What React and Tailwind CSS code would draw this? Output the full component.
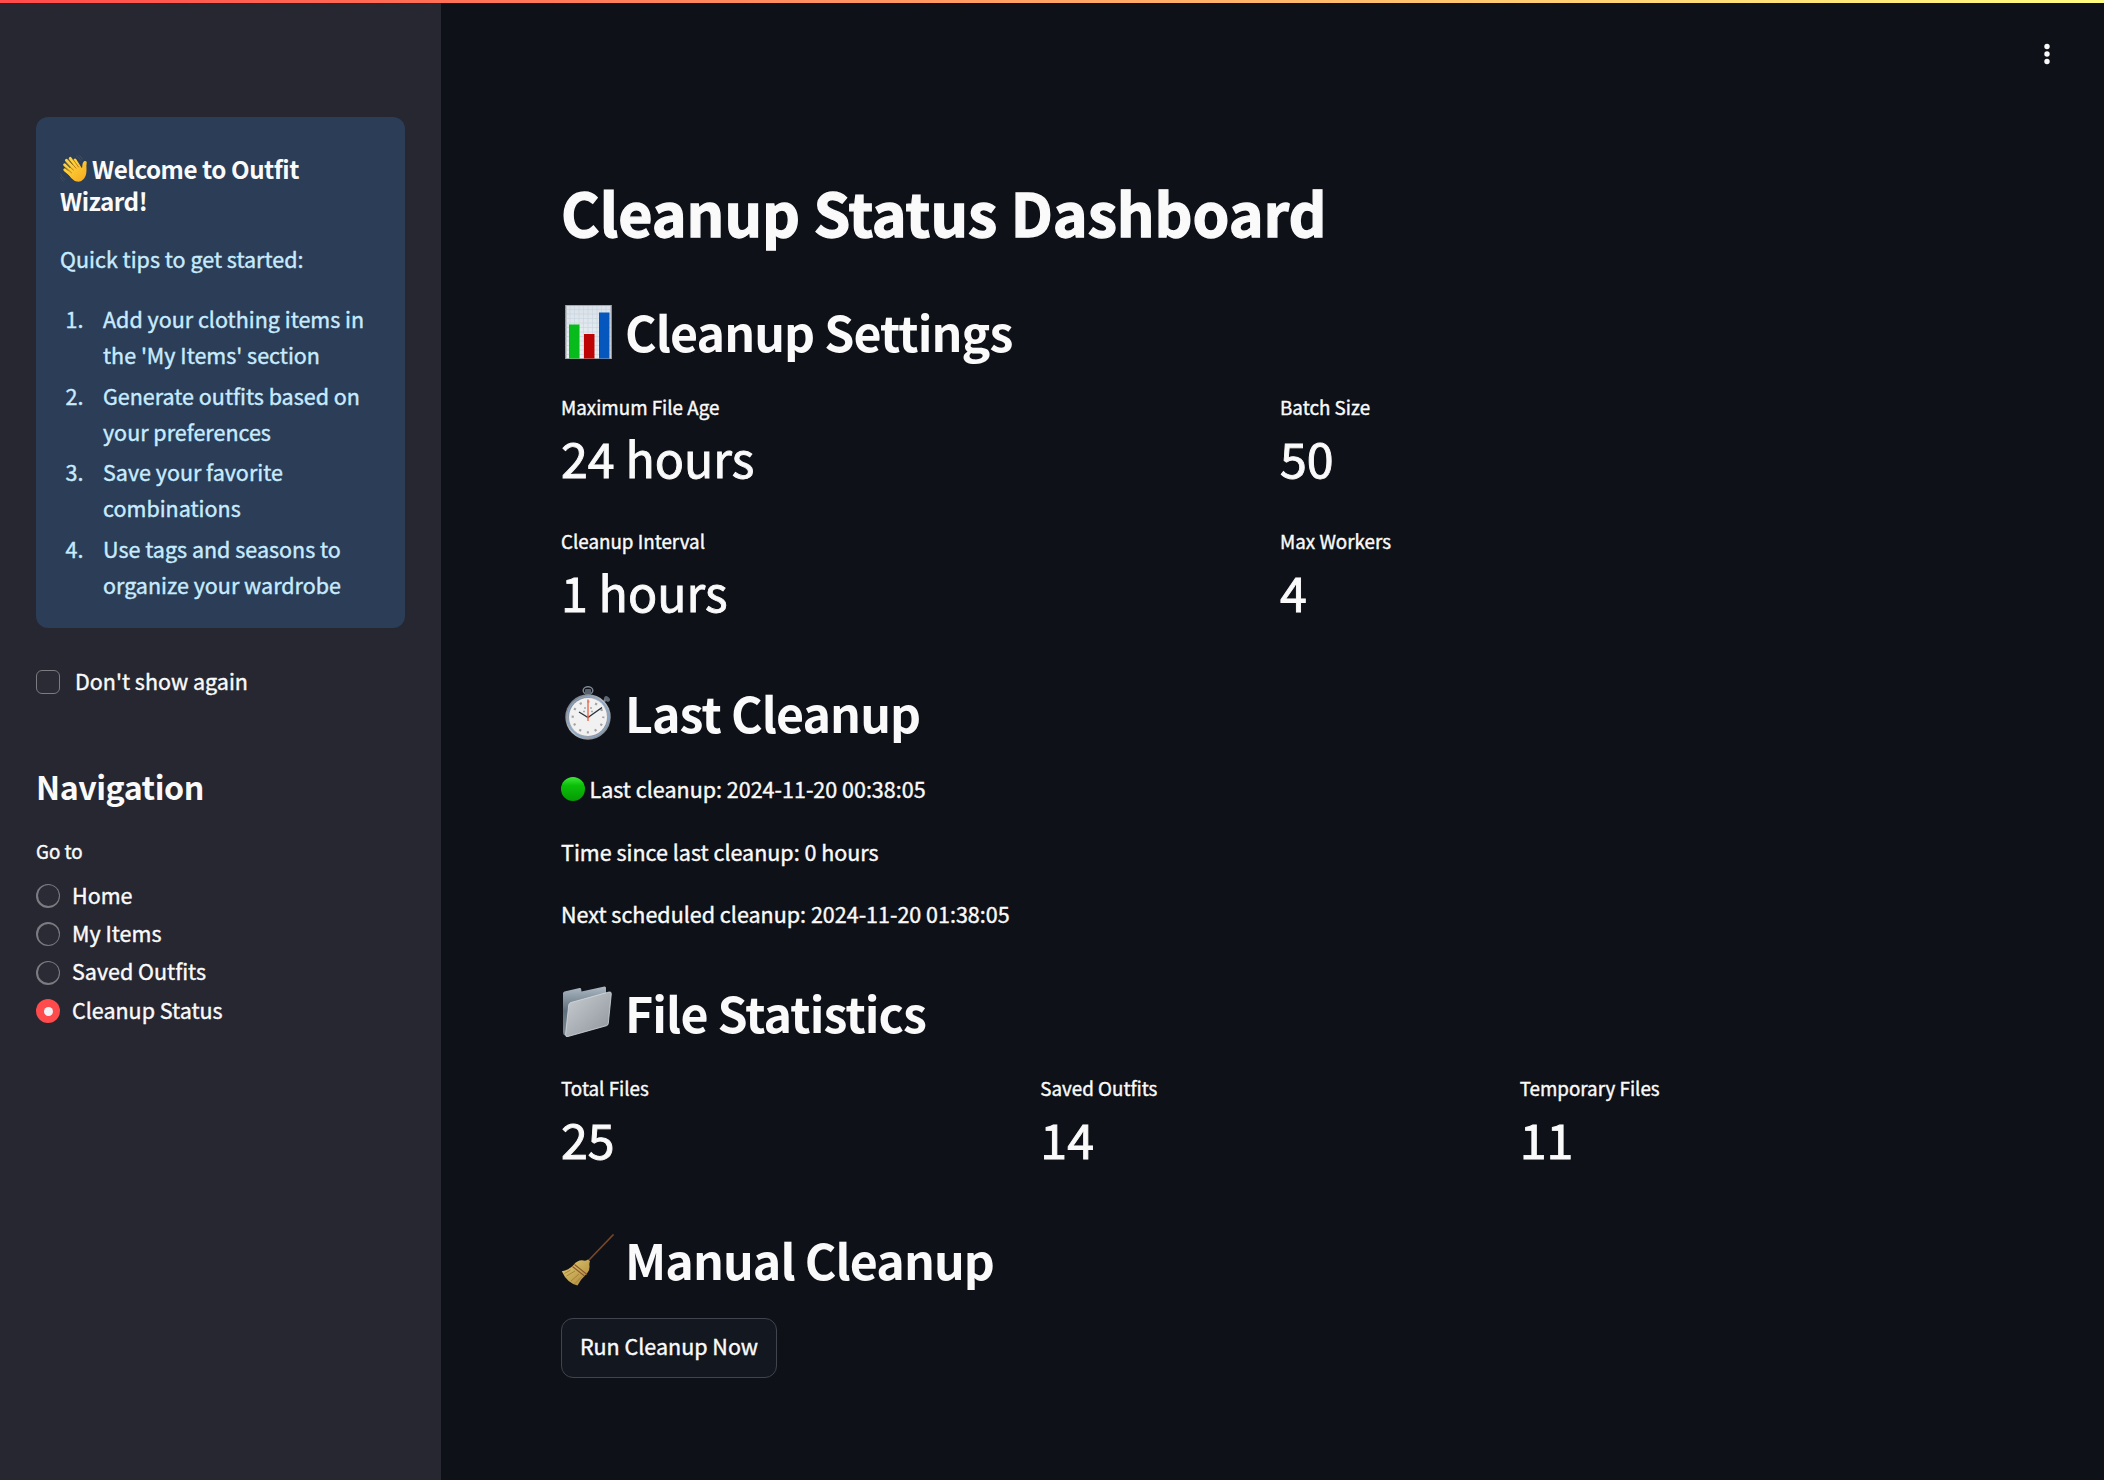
import React from "react";

function WaveIcon() {
  return (
    <svg viewBox="0 0 28 28" className="inline-block h-[28px] w-[28px] shrink-0">
      <defs>
        <linearGradient id="hand" x1="0" y1="0" x2="1" y2="1">
          <stop offset="0" stopColor="#ffd83f" />
          <stop offset="1" stopColor="#f6a81c" />
        </linearGradient>
      </defs>
      <g fill="none" stroke="#ffcf3c" strokeLinecap="round" strokeWidth="2.9">
        <path d="M12 17 4.600 9.800M14 13.500 6.400 5.200M16.500 12 10.200 3.400M19 11.500 15 5M11.500 20.500 4.800 14.800" />
      </g>
      <path d="M9 14 13 10 18.500 8.500C20 10.500 21 12 22 13.200 22.600 11 22 8 24 6.300 26 5.200 27.200 6.600 26.600 8.800 26 11.500 27 14 26.200 18.500 25 24.500 21 27.300 17 26.600 13.500 26 10.500 22.500 7.800 18.500Z" fill="url(#hand)" />
      <g fill="none" stroke="#a8690f" strokeLinecap="round" strokeWidth=".8">
        <path d="m5.800 8.200 7.600 6.800M8.700 4.800l7.300 8.400M13 4.200l5.500 7.800M6 12.800l5.500 5" />
      </g>
      <g fill="none" stroke="#4b5058" strokeLinecap="round" strokeWidth=".9">
        <path d="M16.500 1.200c2 .8 3.400 2.200 4.200 4.200M19 .4c1.600.8 2.600 2 3.200 3.600M.8 19c.6 2.200 2 4.200 4.200 5.400M.6 22.600c.6 1.400 1.400 2.600 2.600 3.400" />
      </g>
    </svg>
  );
}

function ChartIcon() {
  return (
    <svg viewBox="0 0 54 54" className="h-[54px] w-[54px]">
      <defs>
        <linearGradient id="paper" x1="0" y1="0" x2="0" y2="1">
          <stop offset="0" stopColor="#d9e0e7" />
          <stop offset=".5" stopColor="#e4ebf1" />
          <stop offset="1" stopColor="#eef0f2" />
        </linearGradient>
      </defs>
      <rect x="4.500" width="46" height="54" fill="url(#paper)" />
      <path d="M4.500 4.500H50M4.500 9H50M4.500 13.500H50M4.500 18H50M4.500 22.500H50M4.500 27H50M4.500 31.500H50M4.500 36H50M4.500 40.500H50M4.500 45H50M4.500 49.500H50M9 0V54M13.500 0V54M18 0V54M22.500 0V54M27 0V54M31.500 0V54M36 0V54M40.500 0V54M45 0V54" stroke="#c6d3de" strokeWidth=".6" />
      <rect x="5" y=".5" width="45" height="53" fill="none" stroke="#a4a8ac" />
      <rect x="8" y="19.500" width="10.500" height="34" fill="#06bb1b" />
      <rect x="23" y="29" width="10.500" height="24.500" fill="#bd0303" />
      <rect x="38" y="7.500" width="10.500" height="46" fill="#0557bd" />
    </svg>
  );
}

function StopwatchIcon() {
  return (
    <svg viewBox="0 0 54 54" className="h-[54px] w-[54px]">
      <defs>
        <linearGradient id="rim" x1="0" y1="0" x2="1" y2="1">
          <stop offset="0" stopColor="#5f666e" />
          <stop offset=".5" stopColor="#b9c0c8" />
          <stop offset="1" stopColor="#6d747c" />
        </linearGradient>
      </defs>
      <ellipse cx="27" cy="4.500" rx="4.800" ry="3.800" fill="none" stroke="#7b858f" strokeWidth="1.500" />
      <rect x="24" y="3" width="6" height="6" rx="1" fill="#59636e" />
      <path d="m43 15 4-3" stroke="#7b858f" strokeWidth="2.500" />
      <ellipse cx="46" cy="13" rx="3.300" ry="2.300" transform="rotate(40 46 13)" fill="#5e6873" />
      <circle cx="27" cy="31" r="22.700" fill="url(#rim)" />
      <circle cx="27" cy="31" r="20.500" fill="none" stroke="#89a4c4" strokeWidth="1.200" />
      <circle cx="27" cy="31" r="19" fill="#f1f1f1" />
      <circle cx="27" cy="31" r="15.300" fill="none" stroke="#a2a2a2" strokeWidth="2.200" strokeDasharray="2.200 5.810" strokeDashoffset="1.100" />
      <path d="M23 22h2M29 22h2M22 25.500h2M30 25.500h2" stroke="#aaa" strokeWidth="1.500" />
      <path d="M27 13.500V35" stroke="#e8735a" strokeWidth="1.500" />
      <path d="m18 26 9 5.500L41 21.500" fill="none" stroke="#27313b" strokeWidth="1.400" />
      <circle cx="27" cy="31" r="1.300" fill="#d95b42" />
    </svg>
  );
}

function FolderIcon() {
  return (
    <svg viewBox="0 0 54 54" className="h-[54px] w-[54px]">
      <defs>
        <linearGradient id="front" x1="0" y1="0" x2="1" y2="1">
          <stop offset="0" stopColor="#c9ced3" />
          <stop offset="1" stopColor="#8e949a" />
        </linearGradient>
        <linearGradient id="back" x1="0" y1="0" x2="0" y2="1">
          <stop offset="0" stopColor="#aebac4" />
          <stop offset=".5" stopColor="#5e6f7c" />
          <stop offset="1" stopColor="#7e8a93" />
        </linearGradient>
      </defs>
      <path d="M2 7.500Q2 6 3.500 5.500L18.500 2Q20 1.700 20.200 3.200L20.500 5.500 43.500.4Q45 .2 45 2V38L4 49.500Q2 49 2 45Z" fill="url(#back)" />
      <path d="M10 16.500 48 6Q50.500 5.400 50.300 8L47.300 37.500Q47.100 39.200 45.500 39.700L7 50.500Q4.200 51.300 4.600 48.200L7.700 19Q8 17.100 10 16.500Z" fill="url(#front)" stroke="#d5dade" strokeWidth=".8" />
    </svg>
  );
}

function BroomIcon() {
  return (
    <svg viewBox="0 0 54 54" className="h-[54px] w-[54px]">
      <defs>
        <linearGradient id="straw" x1="0" y1="0" x2="1" y2="1">
          <stop offset="0" stopColor="#e5ce78" />
          <stop offset="1" stopColor="#a98434" />
        </linearGradient>
      </defs>
      <path d="M27 28 52 2" stroke="#75462a" strokeWidth="1.800" strokeLinecap="round" />
      <path d="M27 26.500 29 28.500Q28 30 28.500 33 28.800 38 25 41.500 19.500 46.500 16.500 52.500 6 50 .8 38.300 7.500 37.500 12.500 32 17 26.500 22.500 27.500 25.500 28 27 26.500Z" fill="url(#straw)" />
      <path d="m13.500 31.500 12.500 10M11.500 33.500l12 9.500" stroke="#8b552f" strokeWidth="1.100" />
      <path d="m14 38-8.500 5M18 41l-8 7M21 43.500l-7 7M9.500 37l-6 3.500" stroke="#9c7a30" strokeWidth=".8" />
    </svg>
  );
}

function GreenDot() {
  return (
    <svg viewBox="0 0 24 24" className="h-6 w-6">
      <defs>
        <linearGradient id="green" x1="0" y1="0" x2="0" y2="1">
          <stop offset="0" stopColor="#3fe83a" />
          <stop offset=".35" stopColor="#0bbf08" />
          <stop offset="1" stopColor="#069a05" />
        </linearGradient>
      </defs>
      <circle cx="12" cy="12" r="12" fill="url(#green)" />
    </svg>
  );
}

const tips = [
  ["Add your clothing items in", "the 'My Items' section"],
  ["Generate outfits based on", "your preferences"],
  ["Save your favorite", "combinations"],
  ["Use tags and seasons to", "organize your wardrobe"],
];

const pages = ["Home", "My Items", "Saved Outfits", "Cleanup Status"];

function SectionTitle({ icon, children, className }) {
  return (
    <h2 className={`flex h-[65px] items-start text-[48.3px] leading-[65px] font-bold tracking-[-0.019em] whitespace-nowrap [-webkit-text-stroke:0px] ${className}`}>
      <span className="mt-[6px] w-[64px] shrink-0">{icon}</span>
      {children}
    </h2>
  );
}

function Metric({ label, value }) {
  return (
    <div className="h-[102px] whitespace-nowrap">
      <div className="text-[18.8px] leading-[32px]">{label}</div>
      <div className="text-[48.3px] leading-[69px] [-webkit-text-stroke:0.9px_#fafafa]">{value}</div>
    </div>
  );
}

function Sidebar() {
  return (
    <aside className="w-[441px] shrink-0 bg-[#262730] px-9 pt-[114px]">
      <div className="h-[511px] w-[369px] rounded-xl bg-[#2b3d57] px-6 pt-9 text-[#c7ebff]">
        <h4 className="text-[24.2px] leading-[31.5px] font-bold tracking-[-0.0195em] whitespace-nowrap text-[#fafafa] [-webkit-text-stroke:0px]">
          <span className="flex">
            <span className="mt-[2px] mr-[4px] flex h-[29px]"><WaveIcon /></span>
            Welcome to Outfit
          </span>
          Wizard!
        </h4>
        <p className="mt-[25px] leading-9">Quick tips to get started:</p>
        <ol className="mt-[24px] flex flex-col gap-[4.6px] whitespace-nowrap">
          {tips.map(([a, b], i) => (
            <li key={a} className="flex leading-9">
              <span className="mr-[19.500px] w-[23.500px] text-right">{i + 1}.</span>
              <span>
                {a}
                <br />
                {b}
              </span>
            </li>
          ))}
        </ol>
      </div>
      <label className="mt-[34.500px] flex h-9 leading-9">
        <span className="mt-[7.500px] mr-[15px] h-6 w-6 rounded-[6px] border border-[#7b7b82] bg-[#2a2b35]" />
        Don't show again
      </label>
      <h2 className="mt-[66px] text-[32.2px] leading-[43px] font-bold tracking-[-0.0145em] [-webkit-text-stroke:0px]">Navigation</h2>
      <div className="mt-[27px] text-[18.8px] leading-[32px]">Go to</div>
      <div className="mt-[10.200px] flex flex-col">
        {pages.map((p, i) => (
          <label key={p} className="flex h-[38.4px] leading-9">
            {i === 3 ? (
              <span className="mt-[7.200px] mr-3 flex h-6 w-6 items-center justify-center rounded-full bg-[#ff4b4b]">
                <span className="h-[9px] w-[9px] rounded-full bg-[#f0f2f6]" />
              </span>
            ) : (
              <span className="mt-[7.200px] mr-3 h-6 w-6 rounded-full bg-[#7b7b82] p-[1.5px]">
                <span className="block h-full w-full rounded-full bg-[#2a2b35]" />
              </span>
            )}
            {p}
          </label>
        ))}
      </div>
    </aside>
  );
}

export default function App() {
  return (
    <div className="flex h-[1480px] w-[2104px] flex-col overflow-hidden bg-[#0e1117] font-['Noto_Sans_CJK_SC',sans-serif] text-[21.5px] text-[#fafafa] [-webkit-text-stroke:0.4px]">
      <div className="h-[3px] shrink-0 bg-[linear-gradient(90deg,#ff4b4b,#fffd80)]" />
      <div className="flex flex-1">
        <Sidebar />
        <main className="w-[1534px] shrink-0 pt-[168.500px] pl-[120px]">
          <h1 className="text-[59px] leading-[79px] font-bold tracking-[0em] whitespace-nowrap [-webkit-text-stroke:1.3px_#fafafa]">Cleanup Status Dashboard</h1>
          <SectionTitle icon={<ChartIcon />} className="mt-12">Cleanup Settings</SectionTitle>
          <div className="mt-[27.400px] grid grid-cols-2 gap-x-6 gap-y-8">
            <Metric label="Maximum File Age" value="24 hours" />
            <Metric label="Batch Size" value="50" />
            <Metric label="Cleanup Interval" value="1 hours" />
            <Metric label="Max Workers" value="4" />
          </div>
          <SectionTitle icon={<StopwatchIcon />} className="mt-[53px]">Last Cleanup</SectionTitle>
          <div className="mt-[26.600px] flex flex-col gap-[26.500px] leading-9">
            <p className="flex">
              <span className="mt-[6px] mr-[4.500px]"><GreenDot /></span>
              Last cleanup: 2024-11-20 00:38:05
            </p>
            <p>Time since last cleanup: 0 hours</p>
            <p>Next scheduled cleanup: 2024-11-20 01:38:05</p>
          </div>
          <SectionTitle icon={<FolderIcon />} className="mt-[47.500px]">File Statistics</SectionTitle>
          <div className="mt-[26.700px] grid grid-cols-3 gap-x-6">
            <Metric label="Total Files" value="25" />
            <Metric label="Saved Outfits" value="14" />
            <Metric label="Temporary Files" value="11" />
          </div>
          <SectionTitle icon={<BroomIcon />} className="mt-[53.600px]">Manual Cleanup</SectionTitle>
          <button className="mt-[25.600px] flex h-[60px] w-[216px] justify-center rounded-xl border border-[#41444c] bg-[#131720] pt-[9.500px] leading-9 whitespace-nowrap">
            Run Cleanup Now
          </button>
        </main>
        <div className="flex flex-1 justify-end pt-[40px]">
          <svg viewBox="0 0 6 22" className="mr-[54px] h-[22px] w-[6px]" fill="#fafafa">
            <circle cx="3" cy="3.500" r="2.700" />
            <circle cx="3" cy="11" r="2.700" />
            <circle cx="3" cy="18.500" r="2.700" />
          </svg>
        </div>
      </div>
    </div>
  );
}
